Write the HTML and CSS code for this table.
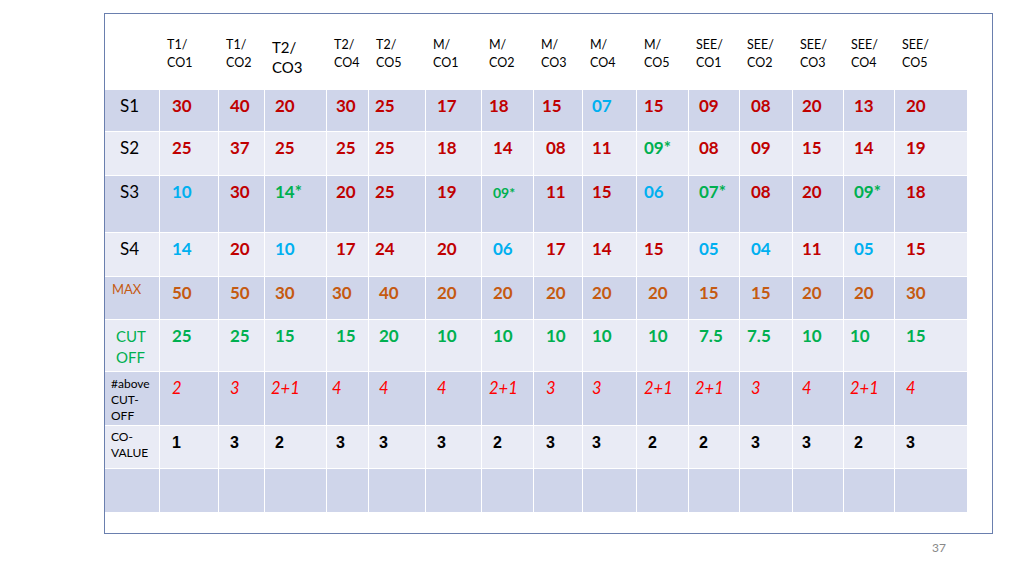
FILE: index.html
```html
<!DOCTYPE html>
<html>
<head>
<meta charset="utf-8">
<link rel="stylesheet" href="styles.css">
</head>
<body>
<div class="slide">
  <div class="frame">
    <div class="grid">
      <div class="row head">
        <div></div>
        <div>T1/<br>CO1</div>
        <div>T1/<br>CO2</div>
        <div class="big">T2/<br>CO3</div>
        <div>T2/<br>CO4</div>
        <div>T2/<br>CO5</div>
        <div>M/<br>CO1</div>
        <div>M/<br>CO2</div>
        <div>M/<br>CO3</div>
        <div>M/<br>CO4</div>
        <div>M/<br>CO5</div>
        <div>SEE/<br>CO1</div>
        <div>SEE/<br>CO2</div>
        <div>SEE/<br>CO3</div>
        <div>SEE/<br>CO4</div>
        <div>SEE/<br>CO5</div>
      </div>
      <div class="row data odd">
        <div class="lab">S1</div>
        <div class="r">30</div><div class="r">40</div><div class="r">20</div><div class="r">30</div><div class="r">25</div>
        <div class="r">17</div><div class="r">18</div><div class="r">15</div><div class="b">07</div><div class="r">15</div>
        <div class="r">09</div><div class="r">08</div><div class="r">20</div><div class="r">13</div><div class="r">20</div>
      </div>
      <div class="row data even">
        <div class="lab">S2</div>
        <div class="r">25</div><div class="r">37</div><div class="r">25</div><div class="r">25</div><div class="r">25</div>
        <div class="r">18</div><div class="r rs">14</div><div class="r rs">08</div><div class="r">11</div><div class="g">09*</div>
        <div class="r">08</div><div class="r">09</div><div class="r">15</div><div class="r">14</div><div class="r">19</div>
      </div>
      <div class="row data odd">
        <div class="lab">S3</div>
        <div class="b">10</div><div class="r">30</div><div class="g">14*</div><div class="r">20</div><div class="r">25</div>
        <div class="r">19</div><div class="g rs small">09*</div><div class="r rs">11</div><div class="r">15</div><div class="b">06</div>
        <div class="g">07*</div><div class="r">08</div><div class="r">20</div><div class="g">09*</div><div class="r">18</div>
      </div>
      <div class="row data even">
        <div class="lab">S4</div>
        <div class="b">14</div><div class="r">20</div><div class="b">10</div><div class="r">17</div><div class="r">24</div>
        <div class="r">20</div><div class="b rs">06</div><div class="r rs">17</div><div class="r">14</div><div class="r">15</div>
        <div class="b">05</div><div class="b">04</div><div class="r">11</div><div class="b">05</div><div class="r">15</div>
      </div>
      <div class="row data odd">
        <div class="lab-max">MAX</div>
        <div class="o">50</div><div class="o">50</div><div class="o">30</div><div class="o ls">30</div><div class="o rs">40</div>
        <div class="o">20</div><div class="o rs">20</div><div class="o rs">20</div><div class="o">20</div><div class="o rs">20</div>
        <div class="o">15</div><div class="o">15</div><div class="o">20</div><div class="o">20</div><div class="o">30</div>
      </div>
      <div class="row data even">
        <div class="lab-cut">CUT<br>OFF</div>
        <div class="g">25</div><div class="g">25</div><div class="g">15</div><div class="g">15</div><div class="g rs">20</div>
        <div class="g">10</div><div class="g rs">10</div><div class="g rs">10</div><div class="g">10</div><div class="g rs">10</div>
        <div class="g">7.5</div><div class="g ls">7.5</div><div class="g">10</div><div class="g ls">10</div><div class="g">15</div>
      </div>
      <div class="row data odd">
        <div class="lab-small">#above<br>CUT-<br>OFF</div>
        <div class="it">2</div><div class="it">3</div><div class="it ls">2+1</div><div class="it ls">4</div><div class="it rs">4</div>
        <div class="it">4</div><div class="it">2+1</div><div class="it rs">3</div><div class="it">3</div><div class="it">2+1</div>
        <div class="it ls">2+1</div><div class="it">3</div><div class="it">4</div><div class="it ls">2+1</div><div class="it">4</div>
      </div>
      <div class="row data even">
        <div class="lab-small co">CO-<br>VALUE</div>
        <div class="k">1</div><div class="k">3</div><div class="k">2</div><div class="k">3</div><div class="k rs">3</div>
        <div class="k">3</div><div class="k rs">2</div><div class="k rs">3</div><div class="k">3</div><div class="k rs">2</div>
        <div class="k">2</div><div class="k">3</div><div class="k">3</div><div class="k">2</div><div class="k">3</div>
      </div>
      <div class="row data odd">
        <div></div><div></div><div></div><div></div><div></div><div></div><div></div><div></div>
        <div></div><div></div><div></div><div></div><div></div><div></div><div></div><div></div>
      </div>
    </div>
  </div>
  <div class="footer">37</div>
</div>
</body>
</html>
```

FILE: styles.css
```css
* { box-sizing: border-box; }
html, body { margin: 0; padding: 0; background: #ffffff; }
body { font-family: Lato, "Liberation Sans", sans-serif; color: #000; }

.slide {
  width: 1024px;
  height: 575px;
  padding-top: 13px;
  overflow: hidden;
}

.frame {
  margin-left: 104px;
  width: 889px;
  height: 521px;
  border: 1px solid #6a7fae;
  background: #ffffff;
}

.grid {
  display: grid;
  width: 862px;
  grid-template-columns: 54px 58px 45px 61px 41px 56px 55px 51px 48px 53px 51px 50px 52px 50px 50px 72px;
  grid-template-rows: 75px 41px 43px 56px 43px 42px 51px 53px 42px 43px;
  gap: 1px;
  background: #ffffff;
}

.row { display: contents; }

.head > div {
  font-size: 12.5px;
  line-height: 18px;
  padding: 22px 0 0 7px;
  color: #000;
}
.head > .big {
  font-size: 15px;
  line-height: 20px;
  padding-top: 23px;
}

.odd > div { background: #cfd5ea; }
.even > div { background: #e9ebf5; }

.data > div {
  font-size: 17px;
  font-weight: 700;
  line-height: 1.2;
  padding-top: 6px;
  white-space: nowrap;
}
.data > div:nth-child(2) { padding-left: 12px; }
.data > div:nth-child(3) { padding-left: 11px; }
.data > div:nth-child(4) { padding-left: 10px; }
.data > div:nth-child(5) { padding-left: 9px; }
.data > div:nth-child(6) { padding-left: 6px; }
.data > div:nth-child(7) { padding-left: 11px; }
.data > div:nth-child(8) { padding-left: 7px; }
.data > div:nth-child(9) { padding-left: 8px; }
.data > div:nth-child(10) { padding-left: 9px; }
.data > div:nth-child(11) { padding-left: 7px; }
.data > div:nth-child(12) { padding-left: 10px; }
.data > div:nth-child(13) { padding-left: 11px; }
.data > div:nth-child(14) { padding-left: 9px; }
.data > div:nth-child(15) { padding-left: 10px; }
.data > div:nth-child(16) { padding-left: 11px; }

.rs { text-indent: 4px; }
.ls { text-indent: -4px; }

.r { color: #c00000; }
.b { color: #00b0f0; }
.g { color: #00b050; }
.o { color: #c55a11; }
.data > .small { font-size: 14px; padding-top: 9px; }

.data > .it {
  color: #ff0000;
  font-style: italic;
  font-weight: 400;
  font-size: 16.5px;
  padding-top: 7px;
}

.data > .k {
  font-family: "Liberation Sans", Arial, sans-serif;
  font-size: 16px;
  font-weight: 700;
  line-height: 1.15;
  padding-top: 8px;
}

.data > .lab {
  font-weight: 400;
  padding-left: 15px;
}

.data > .lab-max {
  font-weight: 400;
  font-size: 13px;
  color: #c55a11;
  padding: 5px 0 0 7px;
}

.data > .lab-cut {
  font-weight: 400;
  font-size: 15px;
  line-height: 21px;
  color: #00b050;
  padding: 6px 0 0 11px;
}

.data > .lab-small {
  font-weight: 400;
  font-size: 12px;
  line-height: 16px;
  padding: 4px 0 0 6px;
}
.data > .lab-small.co { padding-top: 3px; }

.footer {
  display: flex;
  justify-content: flex-end;
  padding: 7px 78px 0 0;
  font-size: 12px;
  line-height: 1.2;
  color: #898989;
}
```
